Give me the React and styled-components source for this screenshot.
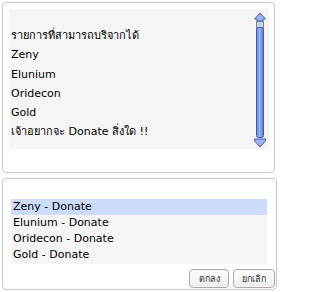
import styled, { createGlobalStyle } from 'styled-components';

const GlobalStyle = createGlobalStyle`
    body {
        margin: 0;
        background: #ffffff;
        font-family: Tahoma, "DejaVu Sans", "Noto Sans", sans-serif;
        font-size: 11px;
        color: #000;
    }
`;

const Page = styled.div`
    width: 278px;
    height: 292px;
    display: flex;
    flex-direction: column;
    gap: 5px;
    padding: 2px 1px 0 2px;
    box-sizing: border-box;
`;

// Painel com borda arredondada
const Panel = styled.div`
    border: 1px solid #c9c9c9;
    border-radius: 4px;
    box-sizing: border-box;
    height: ${props => props.h}px;
    margin-right: ${props => props.mr || 0}px;
    padding: ${props => props.pad};
    display: flex;
    flex-direction: column;
`;

const TalkBox = styled.div`
    flex: 1;
    background: #f5f5f5;
    display: flex;
`;

const TalkText = styled.div`
    flex: 1;
    padding: 17px 0 0 2px;
    overflow: hidden;
`;

const Line = styled.div`
    height: 19.3px;
    line-height: 19px;
    white-space: nowrap;
`;

const ScrollBar = styled.div`
    width: 13px;
    padding: 3px 2px 0 0;
    display: flex;
`;

// Lista de opções
const List = styled.div`
    background: #f5f5f5;
    margin-top: 20px;
    width: 256px;
    margin-left: 8px;
    padding-bottom: 1px;
`;

const Item = styled.div`
    height: 16px;
    line-height: 16px;
    padding-left: 2px;
    background: ${props => (props.selected ? '#ccdcfa' : 'transparent')};
`;

const Buttons = styled.div`
    display: flex;
    justify-content: flex-end;
    gap: 4px;
    margin-top: 5px;
    padding-right: 1px;
`;

const Button = styled.button`
    width: ${props => props.w}px;
    height: 19px;
    padding: 0;
    border: 1px solid #a9a9a9;
    border-radius: 4px;
    background: linear-gradient(#ffffff, #ececec);
    box-shadow: inset 0 0 0 1px #f7f7f7;
    font-family: Tahoma, "DejaVu Sans", "Noto Sans", sans-serif;
    font-size: 9px;
    color: #333;
`;

const Scroll = () => (
    <svg width="12" height="136" viewBox="0 0 12 136">
        <defs>
            <linearGradient id="bar" x1="0" x2="1" y1="0" y2="0">
                <stop offset="0" stopColor="#5a7fd6" />
                <stop offset="0.45" stopColor="#9ab4ef" />
                <stop offset="1" stopColor="#5576cc" />
            </linearGradient>
        </defs>
        <path d="M6 1 L11.5 7 L9 7 L9 9 L3 9 L3 7 L0.5 7 Z" fill="#9bb2ec" stroke="#4461b3" strokeWidth="1" />
        <rect x="2.5" y="9.5" width="7" height="7" fill="#c9d1dc" stroke="#6c7fa8" />
        <rect x="2.5" y="15.5" width="7" height="110" rx="2" fill="url(#bar)" stroke="#3f5db0" />
        <path d="M0.5 127 L11.5 127 L11.5 129 L6 135 L0.5 129 Z" fill="#9bb2ec" stroke="#4461b3" strokeWidth="1" />
    </svg>
);

const talk = [
    'รายการที่สามารถบริจากได้',
    'Zeny',
    'Elunium',
    'Oridecon',
    'Gold',
    'เจ้าอยากจะ Donate สิ่งใด !!',
];

const options = ['Zeny - Donate', 'Elunium - Donate', 'Oridecon - Donate', 'Gold - Donate'];

function App() {
    return (
        <Page>
            <GlobalStyle />
            <Panel h={171} mr={2} pad="6px 5px 23px 6px">
                <TalkBox>
                    <TalkText>
                        {talk.map((t, i) => (
                            <Line key={i}>{t}</Line>
                        ))}
                    </TalkText>
                    <ScrollBar>
                        <Scroll />
                    </ScrollBar>
                </TalkBox>
            </Panel>
            <Panel h={112} pad="0">
                <List>
                    {options.map((o, i) => (
                        <Item key={o} selected={i === 0}>{o}</Item>
                    ))}
                </List>
                <Buttons>
                    <Button w={40}>ตกลง</Button>
                    <Button w={42}>ยกเลิก</Button>
                </Buttons>
            </Panel>
        </Page>
    );
}

export default App;
